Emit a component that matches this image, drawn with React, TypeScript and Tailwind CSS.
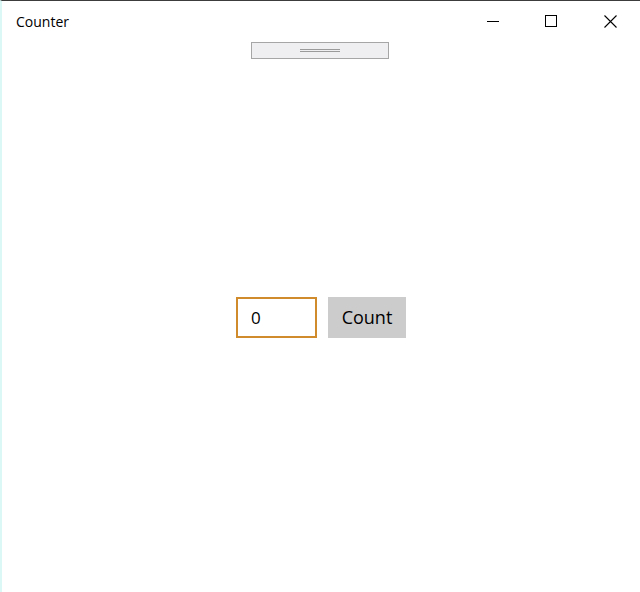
import { useState } from 'react';

export default function App() {
    const [count, setCount] = useState(0);

    return (
        <div className="relative flex h-[592px] w-[640px] flex-col overflow-hidden border-t border-l-2 border-t-[#3c3c3c] border-l-[#dcf8f6] bg-white font-['Open_Sans',sans-serif]">
            {/* Title bar */}
            <div className="flex h-[40px] shrink-0 items-center">
                <span className="pl-[14px] text-[14px] text-black">Counter</span>
                <div className="ml-auto flex h-full">
                    <button className="flex w-[58px] items-center justify-center">
                        <svg width="12" height="12" viewBox="0 0 12 12">
                            <path d="M0 6.5h12" stroke="#000" strokeWidth="1" />
                        </svg>
                    </button>
                    <button className="flex w-[58px] items-center justify-center">
                        <svg width="12" height="12" viewBox="0 0 12 12">
                            <rect x="0.5" y="0.5" width="11" height="11" fill="none" stroke="#000" strokeWidth="1" />
                        </svg>
                    </button>
                    <button className="flex w-[60px] items-center justify-center">
                        <svg width="13" height="13" viewBox="0 0 13 13">
                            <path d="M0.5 0.5l12 12M12.5 0.5l-12 12" stroke="#000" strokeWidth="1.1" />
                        </svg>
                    </button>
                </div>
            </div>

            {/* Drag handle */}
            <div className="absolute left-[249px] top-[41px] flex h-[17px] w-[138px] flex-col items-center justify-center gap-[1px] border border-[#a6a6a6] bg-[#efeff1]">
                <div className="h-[1px] w-[40px] bg-[#9a9a9a]" />
                <div className="h-[1px] w-[40px] bg-[#9a9a9a]" />
            </div>

            {/* Content */}
            <div className="flex flex-1 items-center justify-center gap-[11px] pt-[2px]">
                <input
                    value={count}
                    readOnly
                    className="h-[41px] w-[81px] border-2 border-[#d08c2c] bg-white px-[13px] text-[17px] text-black outline-none"
                />
                <button
                    onClick={() => setCount(count + 1)}
                    className="h-[41px] w-[78px] bg-[#cccccc] text-[18px] text-black"
                >
                    Count
                </button>
            </div>
        </div>
    );
}
